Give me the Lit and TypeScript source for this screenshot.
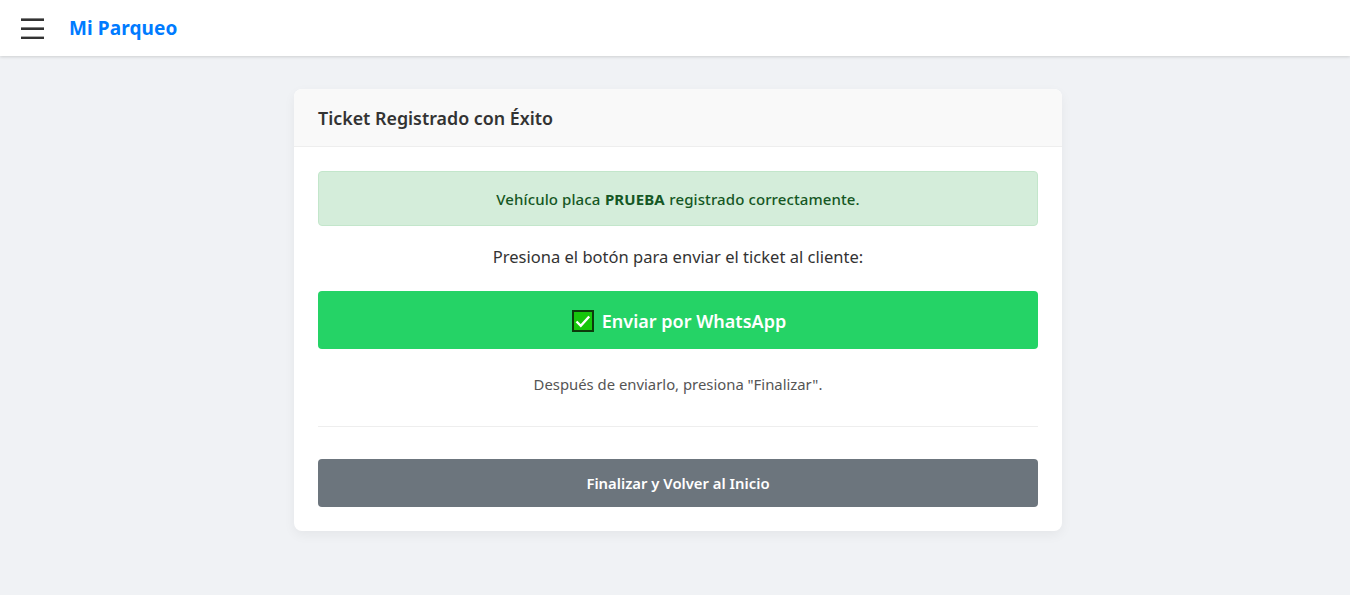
import { LitElement, html, css } from "lit";
import { customElement } from "lit/decorators.js";

@customElement("app-root")
export class AppRoot extends LitElement {
  static styles = css`
    :host {
      display: block;
      min-height: 595px;
      background: #f0f2f5;
      font-family: "Noto Sans", "Open Sans", sans-serif;
      color: #333;
    }
    .navbar {
      height: 56px;
      box-sizing: border-box;
      background: #fff;
      box-shadow: 0 1px 3px rgba(0, 0, 0, 0.15);
      display: flex;
      align-items: center;
      padding-left: 21px;
      gap: 25px;
    }
    .menu {
      display: block;
      width: 23px;
      height: 22px;
    }
    .brand {
      font-size: 19px;
      letter-spacing: 0.1px;
      font-weight: 700;
      color: #007bff;
    }
    main {
      display: flex;
      justify-content: center;
      padding: 33px 0 0 6px;
    }
    .card {
      width: 768px;
      background: #fff;
      border-radius: 8px;
      box-shadow: 0 4px 12px rgba(0, 0, 0, 0.05);
      overflow: hidden;
    }
    .card-header {
      height: 58px;
      box-sizing: border-box;
      padding: 0 24px;
      display: flex;
      align-items: center;
      background: #f9f9f9;
      border-bottom: 1px solid #eeeeee;
      font-size: 17.85px;
      font-weight: 600;
    }
    .card-body {
      padding: 24px;
      display: flex;
      flex-direction: column;
      text-align: center;
    }
    .alert {
      height: 55px;
      box-sizing: border-box;
      display: flex;
      align-items: center;
      justify-content: center;
      background: #d4edda;
      border: 1px solid #c3e6cb;
      border-radius: 4px;
      color: #155724;
      font-size: 15px;
      letter-spacing: 0.1px;
      font-weight: 500;
    }
    .alert b {
      font-weight: 700;
      margin: 0 0.3em;
    }
    .lead {
      margin: 19px 0 22px;
      font-size: 16.55px;
      line-height: 24px;
    }
    .btn {
      display: flex;
      align-items: center;
      justify-content: center;
      box-sizing: border-box;
      border-radius: 4px;
      color: #fff;
      font-weight: 600;
    }
    .whatsapp {
      height: 58px;
      padding: 2px 0 0 2px;
      background: #25d366;
      font-size: 18px;
      gap: 8px;
    }
    .check {
      display: block;
      width: 22px;
      height: 22px;
    }
    .hint {
      margin: 25px 0 31px;
      font-size: 14.85px;
      line-height: 21px;
      color: #555;
    }
    hr {
      width: 100%;
      margin: 0 0 32px;
      border: 0;
      border-top: 1px solid #eeeeee;
    }
    .finish {
      height: 48px;
      background: #6c757d;
      font-size: 14.85px;
    }
  `;

  render() {
    return html`
      <nav class="navbar">
        <svg class="menu" viewBox="0 0 23 22" aria-label="Menu">
          <rect y="1.4" width="23" height="2.6" fill="#333"></rect>
          <rect y="10.4" width="23" height="2.6" fill="#333"></rect>
          <rect y="19.6" width="23" height="2.6" fill="#333"></rect>
        </svg>
        <span class="brand">Mi Parqueo</span>
      </nav>
      <main>
        <section class="card">
          <header class="card-header">Ticket Registrado con Éxito</header>
          <div class="card-body">
            <div class="alert">
              <span>Vehículo placa<b>PRUEBA</b>registrado correctamente.</span>
            </div>
            <p class="lead">Presiona el botón para enviar el ticket al cliente:</p>
            <div class="btn whatsapp">
              <svg class="check" viewBox="0 0 22 22">
                <rect x="1" y="1" width="20" height="20" fill="#16c60c" stroke="#0c3b0c" stroke-width="2"></rect>
                <path d="M4.5 11.5l4.3 4.3 8.4-9.3" fill="none" stroke="#fff" stroke-width="2.4"></path>
              </svg>
              <span>Enviar por WhatsApp</span>
            </div>
            <p class="hint">Después de enviarlo, presiona "Finalizar".</p>
            <hr />
            <div class="btn finish">Finalizar y Volver al Inicio</div>
          </div>
        </section>
      </main>
    `;
  }
}
